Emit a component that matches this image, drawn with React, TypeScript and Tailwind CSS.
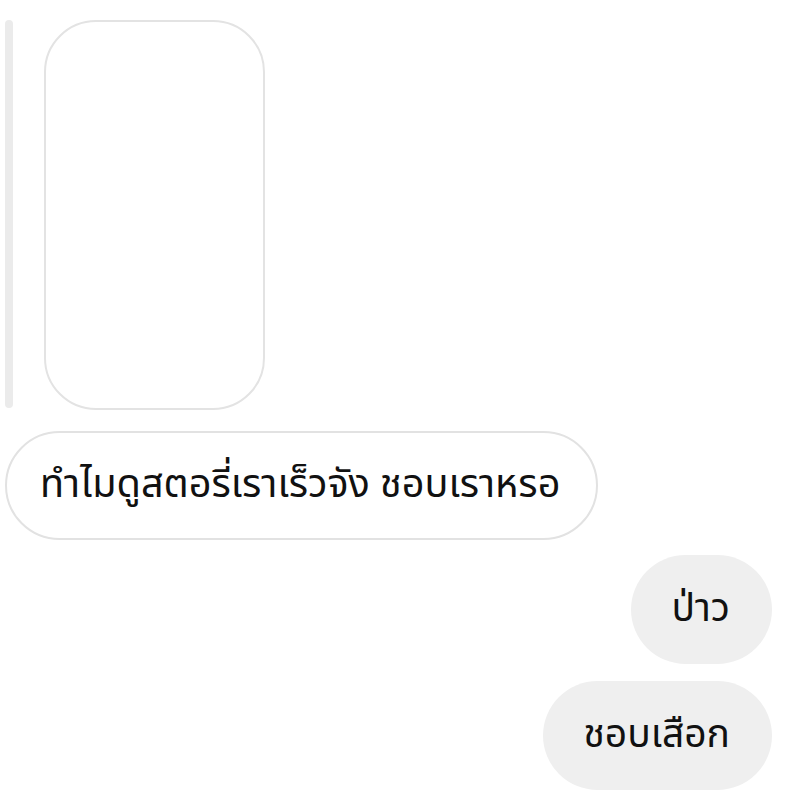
const thaiFont = "font-['Noto_Sans_Thai','Noto_Sans_Thai_UI','Loma','Garuda','Tlwg_Typist','Noto_Sans',sans-serif]"

function Received({ text }: { text: string }) {
  return (
    <div className="flex h-[109px] items-center rounded-full border-2 border-[#e2e2e2] bg-white pl-[33px] pr-[36px]">
      <span className={`${thaiFont} text-[39.6px] leading-none text-[#111]`}>{text}</span>
    </div>
  )
}

function Sent({ text }: { text: string }) {
  return (
    <div className="flex h-[109px] items-center rounded-full bg-[#efefef] pl-[40px] pr-[42px]">
      <span className={`${thaiFont} text-[39px] leading-none text-[#111]`}>{text}</span>
    </div>
  )
}

export default function App() {
  return (
    <div className="flex h-[801px] w-[801px] flex-col overflow-hidden bg-white pt-[20px]">
      {/* story reply preview */}
      <div className="flex gap-[31px] pl-[5px]">
        <div className="h-[388px] w-[8px] rounded-full bg-[#ebebeb]" />
        <div className="h-[390px] w-[221px] rounded-[52px] border-2 border-[#e3e3e3] bg-white" />
      </div>

      <div className="mt-[21px] flex pl-[5px]">
        <Received text="ทำไมดูสตอรี่เราเร็วจัง ชอบเราหรอ" />
      </div>

      <div className="mt-[15px] flex flex-col items-end gap-[17px] pr-[29px]">
        <Sent text="ป่าว" />
        <Sent text="ชอบเสือก" />
      </div>
    </div>
  )
}
